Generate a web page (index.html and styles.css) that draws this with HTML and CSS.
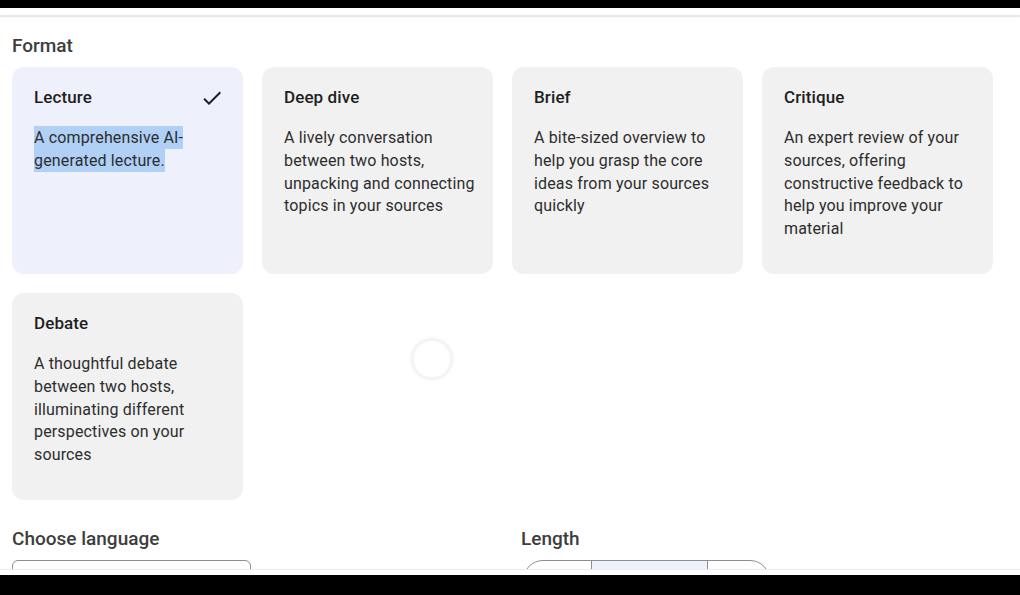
FILE: index.html
```html
<!DOCTYPE html>
<html lang="en">
<head>
<meta charset="utf-8">
<title>Format</title>
<link rel="stylesheet" href="styles.css">
</head>
<body>
<div class="letterbox top"></div>
<div class="screen">
  <div class="topline"></div>
  <main class="content">
    <h2 class="section-title">Format</h2>
    <div class="grid">
      <div class="card selected">
        <div class="card-head">
          <span class="card-title">Lecture</span>
          <svg class="check" viewBox="0 0 24 24" width="24" height="24"><path d="M9 16.17L4.83 12l-1.42 1.41L9 19 21 7l-1.41-1.41z" fill="#1f1f1f"/></svg>
        </div>
        <p class="card-desc"><span class="sel">A comprehensive AI-generated lecture.</span></p>
      </div>
      <div class="card">
        <div class="card-head"><span class="card-title">Deep dive</span></div>
        <p class="card-desc">A lively conversation between two hosts, unpacking and connecting topics in your sources</p>
      </div>
      <div class="card">
        <div class="card-head"><span class="card-title">Brief</span></div>
        <p class="card-desc">A bite-sized overview to help you grasp the core ideas from your sources quickly</p>
      </div>
      <div class="card">
        <div class="card-head"><span class="card-title">Critique</span></div>
        <p class="card-desc">An expert review of your sources, offering constructive feedback to help you improve your material</p>
      </div>
      <div class="card">
        <div class="card-head"><span class="card-title">Debate</span></div>
        <p class="card-desc">A thoughtful debate between two hosts, illuminating different perspectives on your sources</p>
      </div>
      <div class="spinner-cell"><div class="spinner"></div></div>
    </div>
    <div class="bottom-row">
      <div class="field lang">
        <h3 class="field-title">Choose language</h3>
        <div class="select-box"></div>
      </div>
      <div class="field length">
        <h3 class="field-title">Length</h3>
        <div class="segmented">
          <div class="seg first"></div>
          <div class="seg mid"></div>
          <div class="seg last"></div>
        </div>
      </div>
    </div>
  </main>
  <div class="bottomline"></div>
</div>
<div class="letterbox bottom"></div>
</body>
</html>
```

FILE: styles.css
```css
* { box-sizing: border-box; }
html, body { margin: 0; padding: 0; }
body {
  width: 1020px;
  height: 595px;
  overflow: hidden;
  background: #000;
  font-family: Roboto, "Noto Sans", Arial, sans-serif;
  color: #1f1f1f;
  display: flex;
  flex-direction: column;
}
.letterbox.top { height: 8px; background: #000; flex: none; }
.letterbox.bottom { flex: 1; background: #000; }
.screen {
  height: 567px;
  background: #fff;
  display: flex;
  flex-direction: column;
  flex: none;
}
.topline {
  margin-top: 7px;
  height: 2px;
  background: #e8e8e8;
  box-shadow: 0 1px 3px rgba(0,0,0,0.04);
  flex: none;
}
.content {
  height: 552px;
  overflow: hidden;
  padding: 0 0 0 12px;
  flex: none;
}
.section-title {
  margin: 17px 0 9px;
  font-size: 19px;
  line-height: 24px;
  font-weight: 500;
  color: #3d3d3d;
}
.grid {
  display: grid;
  grid-template-columns: repeat(4, 231px);
  grid-auto-rows: 207px;
  gap: 19px;
}
.card {
  background: #f1f1f1;
  border-radius: 12px;
  padding: 18px 14px 0 22px;
}
.card.selected { background: #eef0fb; }
.card-head {
  display: flex;
  align-items: center;
  justify-content: space-between;
  height: 24px;
}
.card-title {
  font-size: 17px;
  font-weight: 500;
  letter-spacing: 0.1px;
  color: #1f1f1f;
  line-height: 24px;
}
.check { display: block; margin-right: 5px; transform: translateY(1px); }
.card-desc {
  margin: 18px 0 0;
  font-size: 16px;
  line-height: 22.75px;
  letter-spacing: 0.15px;
  color: #2d2d2d;
}
.sel {
  background: #b0d0f6;
  padding: 2px 0;
}
.spinner-cell {
  display: flex;
  align-items: center;
  justify-content: center;
  grid-column: 2 / span 1;
}
.spinner {
  width: 38px;
  height: 38px;
  border-radius: 50%;
  background: #fff;
  box-shadow: 0 0 4px 1px rgba(0,0,0,0.10), inset 0 0 3px rgba(0,0,0,0.06);
  transform: translate(54px, -38px);
}
.bottom-row {
  display: flex;
  margin-top: 28px;
}
.field-title {
  margin: 0;
  font-size: 19px;
  line-height: 22px;
  font-weight: 500;
  color: #3d3d3d;
}
.lang { width: 509px; }
.select-box {
  margin-top: 10px;
  width: 239px;
  height: 44px;
  border: 1px solid #8e8e8e;
  border-radius: 6px;
}
.segmented {
  margin-top: 10px;
  margin-left: 2px;
  width: 247px;
  height: 40px;
  display: flex;
  border: 1px solid #8e8e8e;
  border-radius: 20px;
  overflow: hidden;
}
.seg { height: 100%; }
.seg.first { width: 68px; border-right: 1px solid #8e8e8e; }
.seg.mid { width: 116px; background: #eef0fb; border-right: 1px solid #8e8e8e; }
.seg.last { flex: 1; }
.bottomline {
  height: 1px;
  background: #ececec;
  flex: none;
}
```
